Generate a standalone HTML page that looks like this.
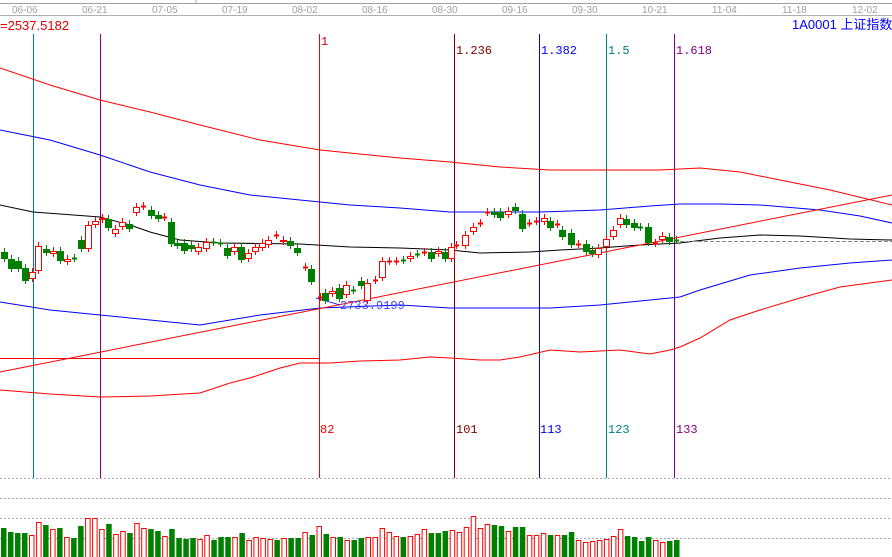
<!DOCTYPE html>
<html><head><meta charset="utf-8"><style>
html,body{margin:0;padding:0;background:#fff;width:892px;height:557px;overflow:hidden}
svg{display:block}
text{font-family:"Liberation Sans","Noto Sans CJK SC",sans-serif;font-size:11px}
text.m{font-family:"Liberation Mono","DejaVu Sans Mono",monospace;font-size:12px}
</style></head><body>
<svg id="s" width="892" height="557" xmlns="http://www.w3.org/2000/svg">
<rect x="0" y="0" width="892" height="557" fill="#fff"/>
<line x1="0" y1="3.5" x2="892" y2="3.5" stroke="#a0a0a0"/>
<line x1="196" y1="0" x2="196" y2="3" stroke="#a0a0a0"/>
<line x1="0" y1="15.5" x2="892" y2="15.5" stroke="#b0b0b0"/>
<g fill="#a0a0a0">
<text x="12" y="13" style="font-size:10px">06-06</text><text x="82" y="13" style="font-size:10px">06-21</text><text x="152" y="13" style="font-size:10px">07-05</text><text x="222" y="13" style="font-size:10px">07-19</text><text x="292" y="13" style="font-size:10px">08-02</text><text x="362" y="13" style="font-size:10px">08-16</text><text x="432" y="13" style="font-size:10px">08-30</text><text x="502" y="13" style="font-size:10px">09-16</text><text x="572" y="13" style="font-size:10px">09-30</text><text x="642" y="13" style="font-size:10px">10-21</text><text x="712" y="13" style="font-size:10px">11-04</text><text x="782" y="13" style="font-size:10px">11-18</text><text x="852" y="13" style="font-size:10px">12-02</text>
</g>
<text x="0" y="30" fill="#e00000" style="font-size:13px">=2537.5182</text>
<text x="792" y="29" fill="#0000ff" style="font-size:13px">1A0001 上证指数</text>
<g stroke-width="1" fill="none">
<line x1="33.5" y1="34" x2="33.5" y2="478" stroke="#008080"/>
<line x1="100.5" y1="34" x2="100.5" y2="478" stroke="#800080"/>
<line x1="319.5" y1="34" x2="319.5" y2="478" stroke="#ff0000"/>
<line x1="454.5" y1="34" x2="454.5" y2="478" stroke="#800000"/>
<line x1="539.5" y1="34" x2="539.5" y2="478" stroke="#0000ff"/>
<line x1="606.5" y1="34" x2="606.5" y2="478" stroke="#008080"/>
<line x1="674.5" y1="34" x2="674.5" y2="478" stroke="#800080"/>
</g>
<text class="m" x="321" y="45" fill="#cc0000">1</text>
<text class="m" x="456" y="54" fill="#800000">1.236</text>
<text class="m" x="541" y="54" fill="#0000ff">1.382</text>
<text class="m" x="608" y="54" fill="#008080">1.5</text>
<text class="m" x="676" y="54" fill="#800080">1.618</text>
<text class="m" x="320" y="433" fill="#ff0000">82</text>
<text class="m" x="456" y="433" fill="#800000">101</text>
<text class="m" x="540" y="433" fill="#0000ff">113</text>
<text class="m" x="608" y="433" fill="#008080">123</text>
<text class="m" x="676" y="433" fill="#800080">133</text>
<g fill="none" stroke-width="1">
<polyline stroke="#ff0000" points="0,68 50,85 100,100 150,112 200,125 260,140 320,150 400,158 450,162 500,167 550,170 620,170 660,170 700,168 740,172 780,180 830,190 892,205"/>
<polyline stroke="#0000ff" points="0,130 50,140 100,155 150,172 200,185 250,195 300,200 350,205 400,208 450,212 540,212 600,210 650,206 680,204 720,204 760,205 820,210 860,216 892,223"/>
<polyline stroke="#000" points="0,205 33,212 60,214 100,217 130,225 150,232 180,240 220,243 300,244 350,247 400,248 450,250 480,253 530,252 560,250 600,248 640,245 680,243 720,238 760,235 800,236 850,239 892,240"/>
<polyline stroke="#0000ff" points="0,302 50,310 100,315 150,320 200,325 230,320 260,315 320,308 400,305 450,308 550,308 600,305 650,300 680,297 700,290 750,275 800,268 850,263 892,260"/>
<polyline stroke="#ff0000" points="0,390 50,394 100,397 150,396 200,393 230,383 250,378 280,368 300,363 330,363 360,361 400,360 430,357 450,358 480,360 500,360 520,357 550,350 580,352 600,351 620,350 650,354 670,350 680,347 700,338 730,320 760,310 800,298 840,287 892,280"/>
<line x1="0" y1="358.5" x2="319" y2="358.5" stroke="#ff0000"/>
<line x1="0" y1="372" x2="892" y2="195" stroke="#ff0000"/>
<line x1="680" y1="241.5" x2="892" y2="241.5" stroke="#888" stroke-dasharray="4,2"/>
</g>
<text class="m" x="340" y="309" fill="#4040ff">2733.9199</text>
<line x1="316" y1="298" x2="340" y2="305" stroke="#0000ff" stroke-width="0.8"/>
<g stroke="#a8a8a8" stroke-dasharray="2,2">
<line x1="0" y1="478.5" x2="892" y2="478.5"/><line x1="0" y1="498.5" x2="892" y2="498.5"/><line x1="0" y1="518.5" x2="892" y2="518.5"/><line x1="0" y1="538.5" x2="892" y2="538.5"/>
</g>
<g id="c"></g><g id="v"></g>
</svg>
<script>
var C=[[4,252,258,'g'],[11,259,268,'g'],[18,261,268,'g'],[25,268,280,'g'],[32,272,278,'r'],[38,246,270,'r'],[46,249,252,'g'],[53,251,253,'r'],[60,251,260,'g'],[67,259,261,'r'],[74,258,258,'g'],[81,240,248,'g'],[88,225,248,'r'],[95,221,224,'r'],[102,218,219,'r'],[108,219,227,'g'],[115,229,233,'r'],[122,222,226,'r'],[129,224,228,'g'],[136,207,212,'r'],[143,206,206,'r'],[151,210,215,'g'],[158,215,218,'g'],[164,217,217,'r'],[171,222,243,'g'],[177,243,245,'g'],[184,243,250,'g'],[191,245,248,'g'],[198,247,251,'r'],[206,242,248,'r'],[213,242,242,'g'],[220,243,243,'g'],[227,248,255,'g'],[234,247,251,'r'],[241,247,259,'g'],[248,253,258,'r'],[255,247,251,'r'],[262,243,247,'r'],[268,240,244,'r'],[276,235,235,'r'],[283,240,241,'r'],[290,241,245,'g'],[297,248,252,'g'],[305,267,267,'r'],[311,269,281,'g'],[320,297,297,'r'],[325,293,300,'g'],[332,291,293,'r'],[339,288,298,'g'],[346,285,294,'r'],[353,290,290,'g'],[361,281,285,'g'],[367,283,300,'r'],[375,280,280,'r'],[382,261,277,'r'],[389,261,261,'r'],[396,261,261,'r'],[403,260,260,'g'],[410,256,258,'r'],[417,254,254,'g'],[424,252,252,'r'],[431,252,258,'g'],[438,251,253,'r'],[445,252,258,'g'],[451,247,258,'r'],[456,245,245,'r'],[465,235,245,'r'],[473,227,231,'r'],[480,223,223,'r'],[487,212,212,'r'],[494,212,214,'g'],[500,212,217,'g'],[508,211,214,'r'],[515,207,210,'g'],[522,214,228,'g'],[529,223,223,'r'],[536,221,221,'r'],[544,218,221,'r'],[550,221,227,'g'],[557,224,224,'r'],[562,230,236,'g'],[571,233,244,'g'],[578,244,244,'r'],[586,244,251,'g'],[592,250,253,'g'],[598,248,254,'r'],[606,239,246,'r'],[613,230,236,'r'],[620,218,224,'r'],[626,219,224,'g'],[634,223,227,'g'],[640,227,227,'g'],[648,227,242,'g'],[655,243,243,'r'],[662,236,239,'r'],[669,237,241,'g'],[676,240,240,'g']];
var h='';
C.forEach(function(c){var col=c[3]=='r'?'#ff0000':'#008000';var x=c[0];
h+='<line x1="'+(x+0.5)+'" y1="'+(c[1]-4)+'" x2="'+(x+0.5)+'" y2="'+(c[2]+4)+'" stroke="'+col+'"/>';
if(c[2]-c[1]<1){h+='<line x1="'+(x-2)+'" y1="'+(c[1]+0.5)+'" x2="'+(x+3)+'" y2="'+(c[1]+0.5)+'" stroke="'+col+'" stroke-width="2"/>';}
else if(c[3]=='r'){h+='<rect x="'+(x-2.5)+'" y="'+(c[1]+0.5)+'" width="6" height="'+(c[2]-c[1])+'" fill="#fff" stroke="#ff0000"/>';}
else{h+='<rect x="'+(x-3)+'" y="'+c[1]+'" width="7" height="'+(c[2]-c[1]+1)+'" fill="#008000"/>';}
});
document.getElementById('c').innerHTML=h;
var V='g528,g532,g533,g533,r535,r522,g525,r529,g528,r537,g538,g526,r518,r518,r529,g524,r534,r531,g533,r523,r528,g529,g531,r536,g529,g538,g539,g538,r539,r535,g540,g537,g537,r537,g533,r540,r537,r538,r539,g540,r538,g538,g538,r532,g535,r526,g534,r537,g537,r540,g540,g538,r537,r537,r528,r532,r536,g537,r536,r534,r529,g533,g533,g531,r530,r532,r527,r516,r528,r524,g525,g526,r531,g527,g527,r535,r535,r533,g535,r535,g535,g532,r540,r542,r541,r540,r539,r536,r529,g536,g537,g541,g537,r540,r542,g541,g540'.split(',');
var s='',n=V.length,step=680/n;
V.forEach(function(v,i){var x=i*step+1,t=+v.slice(1);
if(v[0]=='g')s+='<rect x="'+x.toFixed(1)+'" y="'+t+'" width="5.5" height="'+(557-t)+'" fill="#008000"/>';
else s+='<rect x="'+(x+0.5).toFixed(1)+'" y="'+(t+0.5)+'" width="4.5" height="'+(557-t)+'" fill="#fff" stroke="#ff0000"/>';});
document.getElementById('v').innerHTML=s;
</script>
</body></html>
